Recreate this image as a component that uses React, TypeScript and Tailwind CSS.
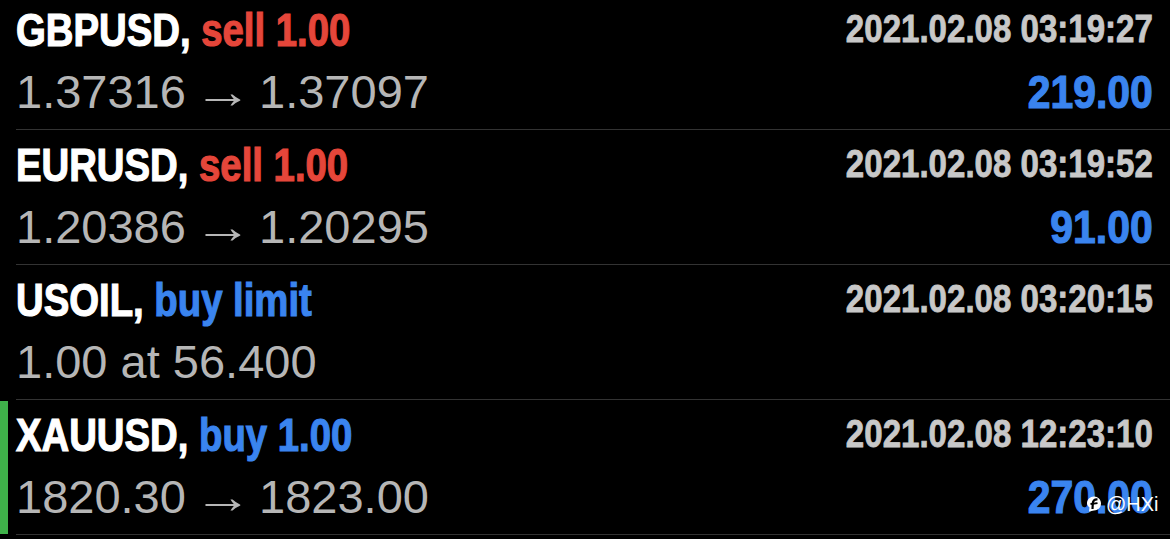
import React from "react";

type Row = {
  sym: string;
  action: string;
  actionColor: string;
  date: string;
  a: string;
  b?: string;
  profit?: string;
  bar?: boolean;
  first?: boolean;
};

const rows: Row[] = [
  {
    sym: "GBPUSD,",
    action: "sell 1.00",
    actionColor: "text-[#e5463a]",
    date: "2021.02.08 03:19:27",
    a: "1.37316",
    b: "1.37097",
    profit: "219.00",
    first: true,
  },
  {
    sym: "EURUSD,",
    action: "sell 1.00",
    actionColor: "text-[#e5463a]",
    date: "2021.02.08 03:19:52",
    a: "1.20386",
    b: "1.20295",
    profit: "91.00",
  },
  {
    sym: "USOIL,",
    action: "buy limit",
    actionColor: "text-[#3a84ef]",
    date: "2021.02.08 03:20:15",
    a: "1.00 at 56.400",
  },
  {
    sym: "XAUUSD,",
    action: "buy 1.00",
    actionColor: "text-[#3a84ef]",
    date: "2021.02.08 12:23:10",
    a: "1820.30",
    b: "1823.00",
    profit: "270.00",
    bar: true,
  },
];

const sans = "font-['Liberation_Sans','Helvetica','Arial',sans-serif]";

function TradeRow({ r }: { r: Row }) {
  return (
    <div className={`flex ${r.first ? "h-[130px]" : "h-[135px]"}`}>
      <div className="w-[16px] shrink-0 flex">
        {r.bar && <div className="w-[8px] bg-[#3fb24a] my-[1px]" />}
      </div>
      <div
        className={`flex-1 flex flex-col border-b border-[#333333] pr-[17px] ${
          r.first ? "pt-[2px]" : "pt-[7px]"
        }`}
      >
        <div className="flex justify-between items-start h-[56px]">
          <div
            className={`${sans} font-bold text-[47px] leading-[56px] whitespace-nowrap inline-block origin-left [transform:scaleX(0.815)] [-webkit-text-stroke:1.2px_currentColor]`}
          >
            <span className="text-white">{r.sym}</span>{" "}
            <span className={r.actionColor}>{r.action}</span>
          </div>
          <div
            className={`${sans} font-bold text-[38px] leading-[54px] text-[#c8c8c8] whitespace-nowrap inline-block origin-right [transform:scaleX(0.87)] [-webkit-text-stroke:0.8px_currentColor]`}
          >
            {r.date}
          </div>
        </div>
        <div className="flex justify-between items-baseline h-[60px] mt-[4px]">
          <div className={`${sans} text-[47px] leading-[60px] text-[#b6b6b6] whitespace-nowrap`}>
            {r.a}
            {r.b && (
              <>
                {" "}
                <span className="inline-block [transform:scaleX(1.25)]">→</span>{" "}
                {r.b}
              </>
            )}
          </div>
          {r.profit && (
            <div
              className={`${sans} font-bold text-[47px] leading-[60px] text-[#3a84ef] whitespace-nowrap inline-block origin-right [transform:scaleX(0.87)] [-webkit-text-stroke:1.2px_currentColor]`}
            >
              {r.profit}
            </div>
          )}
        </div>
      </div>
    </div>
  );
}

export default function App() {
  return (
    <div className="relative w-[1170px] h-[539px] bg-black overflow-hidden">
      {rows.map((r, i) => (
        <TradeRow key={i} r={r} />
      ))}
      <div className="absolute left-[1086px] top-[494px] flex items-center gap-[4px]">
        <svg width="16" height="18" viewBox="0 0 16 18">
          <path
            d="M8 1.5 C12 1.5 15 4.5 15 8.5 C15 12.5 12 15.5 8 15.5 L3 16.5 L3.5 12.5 C2 11 1 9.8 1 8.5 C1 4.5 4 1.5 8 1.5 Z"
            fill="#ffffff"
          />
          <path d="M11.5 4.5 C8.5 4.2 6.8 5.8 6.8 8.5 L6.5 14" stroke="#000" strokeWidth="2.2" fill="none" />
          <path d="M4.5 9 L11.5 8.2" stroke="#000" strokeWidth="1.8" />
        </svg>
        <span className={`${sans} text-[20px] leading-[20px] text-white`}>@HXi</span>
      </div>
    </div>
  );
}
